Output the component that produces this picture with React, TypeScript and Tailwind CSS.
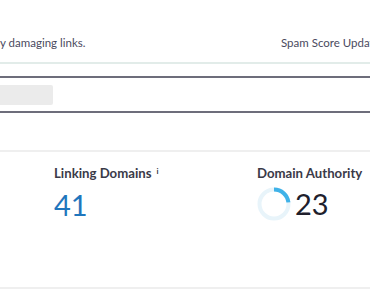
import React from 'react';

const DomainAuthorityRing = ({ value }: { value: number }) => {
    const r = 14.5;
    const c = 2 * Math.PI * r;
    return (
        <svg width="34" height="34" viewBox="0 0 34 34" className="shrink-0">
            <circle cx="17" cy="17" r={r} fill="none" stroke="#e8f4fa" strokeWidth="4" />
            <circle
                cx="17"
                cy="17"
                r={r}
                fill="none"
                stroke="#3fb2e8"
                strokeWidth="4"
                strokeDasharray={`${(c * value) / 100} ${c}`}
                transform="rotate(-90 17 17)"
            />
        </svg>
    );
};

export default function App() {
    return (
        <div className="w-[370px] h-[300px] overflow-hidden bg-white font-['Lato','Liberation_Sans',sans-serif]">
            <div className="h-[64px] flex justify-between items-end pb-[11px] border-b-2 border-[#e2ece9] text-[11.5px] text-[#4a4a60] whitespace-nowrap">
                <span>y damaging links.</span>
                <span className="-mr-[40px] w-[129px]">Spam Score Updated</span>
            </div>

            <div className="mt-[12px] h-[37px] border-y-2 border-[#6d6d7b] flex items-center">
                <div className="h-[20px] w-[53px] bg-[#ebebeb] rounded-r-[2px] blur-[0.6px]" />
            </div>

            <div className="mt-[37px] h-[139px] border-y-2 border-[#efefef] flex pl-[54px] pt-[12px]">
                <div className="w-[203px] shrink-0">
                    <div className="text-[13.2px] font-bold text-[#3a3a48] whitespace-nowrap">
                        Linking Domains
                        <sup className="ml-[5px] text-[8px] font-bold">i</sup>
                    </div>
                    <div className="mt-[3px] text-[29px] leading-[36px] text-[#1f76bd]">41</div>
                </div>
                <div className="shrink-0">
                    <div className="text-[13.2px] font-bold text-[#3a3a48] whitespace-nowrap">
                        Domain Authority
                    </div>
                    <div className="mt-[2px] flex items-center gap-[4px]">
                        <DomainAuthorityRing value={23} />
                        <span className="text-[29px] leading-[36px] text-[#20202c]">23</span>
                    </div>
                </div>
            </div>
        </div>
    );
}
